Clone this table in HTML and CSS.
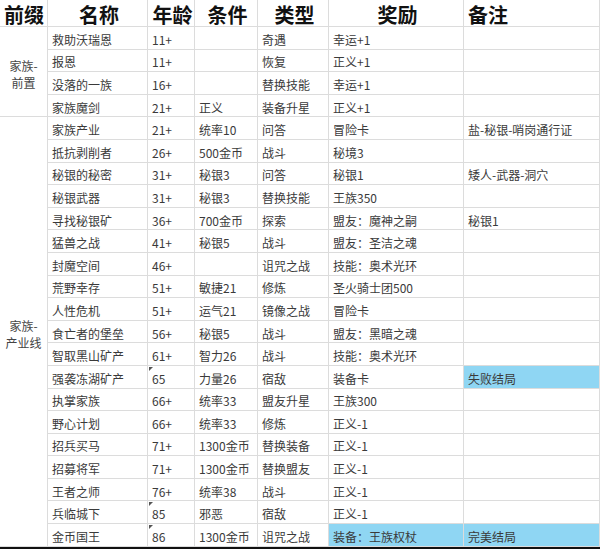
FILE: index.html
```html
<!DOCTYPE html>
<html lang="zh">
<head>
<meta charset="utf-8">
<link rel="stylesheet" href="styles.css">
</head>
<body>
<div class="sheet">
  <div class="grid">
    <div class="th left">前缀</div>
    <div class="th center">名称</div>
    <div class="th center">年龄</div>
    <div class="th center">条件</div>
    <div class="th center">类型</div>
    <div class="th center">奖励</div>
    <div class="th left">备注</div>

    <div class="group span4">家族-<br>前置</div>
    <div class="td">救助沃瑞恩</div><div class="td">11+</div><div class="td"></div><div class="td">奇遇</div><div class="td">幸运+1</div><div class="td"></div>
    <div class="td">报恩</div><div class="td">11+</div><div class="td"></div><div class="td">恢复</div><div class="td">正义+1</div><div class="td"></div>
    <div class="td">没落的一族</div><div class="td">16+</div><div class="td"></div><div class="td">替换技能</div><div class="td">幸运+1</div><div class="td"></div>
    <div class="td">家族魔剑</div><div class="td">21+</div><div class="td">正义</div><div class="td">装备升星</div><div class="td">正义+1</div><div class="td"></div>

    <div class="group span19">家族-<br>产业线</div>
    <div class="td">家族产业</div><div class="td">21+</div><div class="td">统率10</div><div class="td">问答</div><div class="td">冒险卡</div><div class="td">盐-秘银-哨岗通行证</div>
    <div class="td">抵抗剥削者</div><div class="td">26+</div><div class="td">500金币</div><div class="td">战斗</div><div class="td">秘境3</div><div class="td"></div>
    <div class="td">秘银的秘密</div><div class="td">31+</div><div class="td">秘银3</div><div class="td">问答</div><div class="td">秘银1</div><div class="td">矮人-武器-洞穴</div>
    <div class="td">秘银武器</div><div class="td">31+</div><div class="td">秘银3</div><div class="td">替换技能</div><div class="td">王族350</div><div class="td"></div>
    <div class="td">寻找秘银矿</div><div class="td">36+</div><div class="td">700金币</div><div class="td">探索</div><div class="td">盟友：魔神之嗣</div><div class="td">秘银1</div>
    <div class="td">猛兽之战</div><div class="td">41+</div><div class="td">秘银5</div><div class="td">战斗</div><div class="td">盟友：圣洁之魂</div><div class="td"></div>
    <div class="td">封魔空间</div><div class="td">46+</div><div class="td"></div><div class="td">诅咒之战</div><div class="td">技能：奥术光环</div><div class="td"></div>
    <div class="td">荒野幸存</div><div class="td">51+</div><div class="td">敏捷21</div><div class="td">修炼</div><div class="td">圣火骑士团500</div><div class="td"></div>
    <div class="td">人性危机</div><div class="td">51+</div><div class="td">运气21</div><div class="td">镜像之战</div><div class="td">冒险卡</div><div class="td"></div>
    <div class="td">食亡者的堡垒</div><div class="td">56+</div><div class="td">秘银5</div><div class="td">战斗</div><div class="td">盟友：黑暗之魂</div><div class="td"></div>
    <div class="td">智取黑山矿产</div><div class="td">61+</div><div class="td">智力26</div><div class="td">战斗</div><div class="td">技能：奥术光环</div><div class="td"></div>
    <div class="td">强袭冻湖矿产</div><div class="td flag">65</div><div class="td">力量26</div><div class="td">宿敌</div><div class="td">装备卡</div><div class="td blue">失败结局</div>
    <div class="td">执掌家族</div><div class="td">66+</div><div class="td">统率33</div><div class="td">盟友升星</div><div class="td">王族300</div><div class="td"></div>
    <div class="td">野心计划</div><div class="td">66+</div><div class="td">统率33</div><div class="td">修炼</div><div class="td">正义-1</div><div class="td"></div>
    <div class="td">招兵买马</div><div class="td">71+</div><div class="td">1300金币</div><div class="td">替换装备</div><div class="td">正义-1</div><div class="td"></div>
    <div class="td">招募将军</div><div class="td">71+</div><div class="td">1300金币</div><div class="td">替换盟友</div><div class="td">正义-1</div><div class="td"></div>
    <div class="td">王者之师</div><div class="td">76+</div><div class="td">统率38</div><div class="td">战斗</div><div class="td">正义-1</div><div class="td"></div>
    <div class="td">兵临城下</div><div class="td flag">85</div><div class="td">邪恶</div><div class="td">宿敌</div><div class="td">正义-1</div><div class="td"></div>
    <div class="td">金币国王</div><div class="td flag">86</div><div class="td">1300金币</div><div class="td">诅咒之战</div><div class="td blue">装备：王族权杖</div><div class="td blue">完美结局</div>
  </div>
  <div class="rule"></div>
</div>
</body>
</html>
```
FILE: styles.css
```css
html, body {
  margin: 0;
  padding: 0;
  background: #ffffff;
}

.sheet {
  width: 600px;
  font-family: "Noto Sans CJK SC", "Noto Sans", sans-serif;
}

.grid {
  display: grid;
  grid-template-columns: 48px 100px 47px 63px 71px 135px 136px;
  grid-template-rows: 27px;
  grid-auto-rows: 22.6px;
}

.th,
.td,
.group {
  box-sizing: border-box;
  border-right: 1px solid #dcdcdc;
  border-bottom: 1px solid #dcdcdc;
  display: flex;
  align-items: center;
  white-space: nowrap;
}

.td,
.group {
  overflow: hidden;
}

.th {
  font-size: 20px;
  font-weight: 700;
  color: #111111;
  padding: 3px 1px 0 4px;
  line-height: 24px;
}

.th.center {
  justify-content: center;
}

.th.left {
  justify-content: flex-start;
}

.td {
  font-size: 12px;
  color: #3a3a3a;
  padding: 3px 4px 0;
  position: relative;
}

.group {
  font-size: 12px;
  color: #444444;
  justify-content: center;
  text-align: center;
  line-height: 17px;
  padding-top: 5px;
  grid-column: 1;
}

.span4 {
  grid-row: span 4;
}

.span19 {
  grid-row: span 19;
}

.blue {
  background: #8fd6f3;
}

.flag::before {
  content: "";
  position: absolute;
  left: 1px;
  top: 1px;
  border-top: 4px solid #555555;
  border-right: 4px solid transparent;
}

.rule {
  height: 2px;
  background: #111111;
}
```
